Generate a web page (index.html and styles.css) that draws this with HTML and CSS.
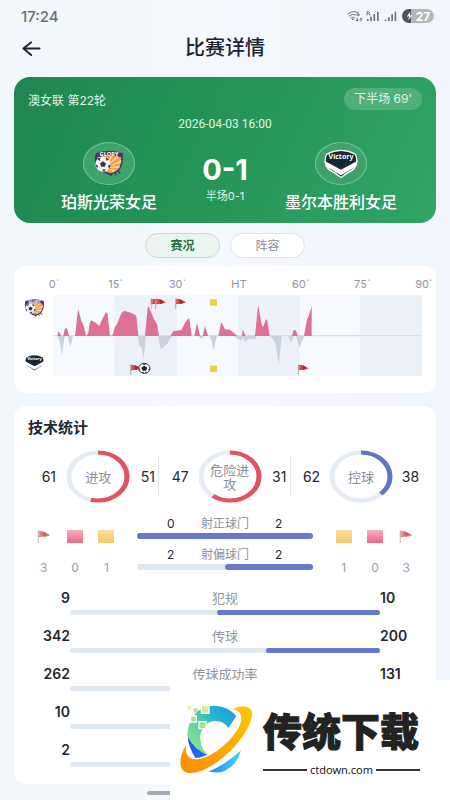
FILE: index.html
```html
<!DOCTYPE html>
<html lang="zh-CN">
<head>
<meta charset="utf-8">
<meta name="viewport" content="width=device-width, initial-scale=1">
<title>比赛详情</title>
<link rel="stylesheet" href="styles.css">
</head>
<body>
<svg class="defs" aria-hidden="true">
  <defs>
    <linearGradient id="gred" x1="0" y1="0" x2="0" y2="1"><stop offset="0" stop-color="#f9b0bb"/><stop offset="1" stop-color="#e8668a"/></linearGradient>
    <linearGradient id="gyel" x1="0" y1="0" x2="0" y2="1"><stop offset="0" stop-color="#fbdf9f"/><stop offset="1" stop-color="#f5c867"/></linearGradient>
    <symbol id="glory" viewBox="0 0 90 80">
      <path d="M5 9Q45-6 86 9Q91 45 73 64L50 76Q22 66 9 52Q-2 30 5 9Z" fill="#4d3566"/>
      <path d="M10 22Q45 12 81 21Q84 42 70 60L52 70Q25 62 14 48Z" fill="#f0a04b"/>
      <path d="M40 42L50 17L56 17ZM42 44L67 19L75 20ZM44 48L82 30L81 38ZM44 52L78 47L75 54ZM42 54L66 62L60 66Z" fill="#fbe0ae"/>
      <text x="45" y="18" text-anchor="middle" class="crest-text">GLORY</text>
      <circle cx="27" cy="42" r="23" fill="#f5f2f6"/>
      <path d="M27 33L36 40L32 50H22L18 40ZM10 26L20 22L16 33ZM35 21L45 28L38 32ZM4 42L12 47L10 55ZM24 58L35 57L30 65ZM42 47L50 42L46 57Z" fill="#3c2855"/>
      <path d="M53 68L50 78M62 64L66 76M71 59L78 70" stroke="#4d3566" stroke-width="4"/>
    </symbol>
    <symbol id="victory" viewBox="0 0 106 90">
      <path d="M8 15Q53-10 98 15Q110 47 88 65Q70 74 53 88Q36 74 18 65Q-4 47 8 15Z" fill="#fff"/>
      <path d="M11 17Q53-5 95 17Q105 44 86 61Q69 70 53 83Q37 70 20 61Q1 44 11 17Z" fill="#172735"/>
      <path d="M3 35L53 62L103 35L99 52L53 79L7 52Z" fill="#fff"/>
      <text x="53" y="29" text-anchor="middle" class="crest-text crest-victory">Victory</text>
    </symbol>
    <symbol id="flag" viewBox="0 0 34 34">
      <path d="M2 1V34" stroke="#b9a9ae" stroke-width="3"/>
      <path d="M3 2L15 4L33 13Q25 18 15 17L3 19Z" fill="#d93c48"/>
      <path d="M15 4L25 9L20 17H15Z" fill="#a92735"/>
      <path d="M6 4V16" stroke="#f0868c" stroke-width="3"/>
    </symbol>
    <symbol id="red" viewBox="0 0 48 39"><rect width="48" height="39" fill="url(#gred)"/></symbol>
    <symbol id="yellow" viewBox="0 0 48 39"><rect width="48" height="39" fill="url(#gyel)"/></symbol>
  </defs>
</svg>

<div class="status">
  <span class="clock">17:24</span>
  <div class="status-icons">
    <svg class="signals" viewBox="0 0 156 40" aria-hidden="true">
      <g fill="none" stroke="#6c6e73" stroke-width="3">
        <path d="M3 13Q19 0 33 8M7 19Q18 9 29 16M13 25Q19 19 25 24"/>
        <path d="M37 6Q31 9 32 15Q35 19 39 16Q40 11 33 12M33 24V34M29 30L33 34L37 30M44 35V25M40 29L44 25L48 29" stroke-width="3"/>
        <path d="M63 16V5H68Q73 8 68 11H63M68 11L73 17" stroke-width="3"/>
        <path d="M65 34V28M75 34V21M85 34V12M96 34V5M120 34V29M130 34V22M140 34V13M150 34V5" stroke-width="5"/>
      </g>
      <circle cx="19" cy="28" r="3" fill="#6c6e73"/>
    </svg>
    <span class="battery">
      <svg class="bolt" viewBox="0 0 18 24" aria-hidden="true"><path d="M11 1L2 13H8L6 23L16 10H10Z" fill="#fff"/></svg>27
    </span>
  </div>
</div>

<header class="topbar">
  <button class="back" aria-label="返回">
    <svg viewBox="0 0 60 48" aria-hidden="true"><path d="M56 24H5M29 4L4 24L29 45" fill="none" stroke="#202434" stroke-width="6" stroke-linecap="round" stroke-linejoin="round"/></svg>
  </button>
  <h1>比赛详情</h1>
</header>

<main>
  <section class="hero">
    <div class="hero-top"><span>澳女联 第22轮</span><span class="pill">下半场 69'</span></div>
    <p class="date">2026-04-03 16:00</p>
    <div class="match">
      <div class="team"><span class="crest"><svg class="crest-home"><use href="#glory"/></svg></span><strong>珀斯光荣女足</strong></div>
      <div class="score"><strong>0-1</strong><span>半场0-1</span></div>
      <div class="team"><span class="crest"><svg class="crest-away"><use href="#victory"/></svg></span><strong>墨尔本胜利女足</strong></div>
    </div>
  </section>

  <nav class="tabs">
    <button class="tab active">赛况</button>
    <button class="tab">阵容</button>
  </nav>

  <section class="card trend">
    <div class="times"><span>0`</span><span>15`</span><span>30`</span><span>HT</span><span>60`</span><span>75`</span><span>90`</span></div>
    <div class="trend-body">
      <div class="sides"><svg><use href="#glory"/></svg><svg><use href="#victory"/></svg></div>
      <svg class="plot" viewBox="159 105 1107 243" preserveAspectRatio="none" role="img" aria-label="进攻走势">
        <rect x="159" y="105" width="1107" height="243" fill="#f6f9fd"/>
        <path d="M343 105h188v243H343zM714 105h185v243H714zM1081 105h185v243h-185z" fill="#ecf1f9"/>
        <path d="M159 227H1266" stroke="#d4dae3" stroke-width="3"/>
        <path fill="#cbd1dd" d="M174 228L179 245L186 287L192 240L196 228ZM203 228L211 262L219 228ZM413 228L418 255L424 262L431 295L438 228ZM474 228L479 252L483 270L491 261L503 250L508 238L518 228ZM596 228L604 236L611 228ZM630 228L636 248L641 272L646 245L651 228ZM700 228L714 238L724 242L728 232L735 245L745 238L765 238L770 228ZM810 228L820 240L827 252L836 315L845 228ZM864 228L873 249L882 228ZM888 228L898 262L908 238L914 228Z"/>
        <path fill="#df7095" d="M172 228L176 214L184 228H190Q194 203 198 203T207 228H225L233 157Q235 145 237 155L243 180L252 200L258 228L264 222L270 186Q272 180 276 182L285 187L298 198L308 175L317 159Q321 154 323 163L330 228L338 225L345 200L351 193L362 165Q367 153 374 153L388 157L405 164Q409 166 410 176L415 228H435L443 144Q445 135 448 145L453 155L462 178L472 195L477 228H511L520 214L545 209L555 188L564 177Q567 173 569 182L575 228H583L591 188L600 228H608L615 197L624 228H655L663 190Q665 186 667 191L675 208L690 209L713 228H726L728 208L737 228H765L773 146Q775 131 777 146L785 195L790 200L797 180Q799 174 802 183L809 228H876Q884 190 893 228H912L921 178L926 168L935 138V228Z"/>
        <use href="#flag" x="451" y="114" width="34" height="34"/><use href="#flag" x="465" y="114" width="34" height="34"/>
        <use href="#flag" x="525" y="114" width="34" height="34"/>
        <use href="#flag" x="390" y="312" width="34" height="34"/><use href="#flag" x="893" y="312" width="34" height="34"/>
        <path d="M630 118h21v19h-21zM630 317h21v19h-21z" fill="#e8cf4d"/>
        <ellipse cx="433" cy="325" rx="17" ry="15" fill="#f5f5f5" stroke="#333" stroke-width="3"/>
        <path d="M433 317L442 323L438 332H428L424 323ZM425 311H441L433 315ZM417 323L421 330L418 332ZM449 323L445 330L449 332ZM424 337L430 335L432 340ZM442 337L437 335L435 340Z" fill="#222"/>
      </svg>
    </div>
  </section>

  <section class="card stats">
    <h2>技术统计</h2>
    <div class="rings">
      <div class="ring-cell"><b>61</b><div class="ring">
        <svg viewBox="0 0 64 64" preserveAspectRatio="none"><circle class="track" cx="32" cy="32" r="29"/><circle class="arc red" cx="32" cy="32" r="29" pathLength="100" stroke-dasharray="54 100"/></svg><span>进攻</span></div><b>51</b></div>
      <div class="ring-cell"><b>47</b><div class="ring">
        <svg viewBox="0 0 64 64" preserveAspectRatio="none"><circle class="track" cx="32" cy="32" r="29"/><circle class="arc red" cx="32" cy="32" r="29" pathLength="100" stroke-dasharray="60 100"/></svg><span>危险进攻</span></div><b>31</b></div>
      <div class="ring-cell"><b>62</b><div class="ring">
        <svg viewBox="0 0 64 64" preserveAspectRatio="none"><circle class="track" cx="32" cy="32" r="29"/><circle class="arc blue" cx="32" cy="32" r="29" pathLength="100" stroke-dasharray="38 100"/></svg><span>控球</span></div><b>38</b></div>
    </div>

    <div class="discipline">
      <div class="cards">
        <div><svg class="faded"><use href="#flag"/></svg><span>3</span></div>
        <div><svg><use href="#red"/></svg><span>0</span></div>
        <div><svg><use href="#yellow"/></svg><span>1</span></div>
      </div>
      <div class="shots">
        <div class="shot"><div class="shot-text"><b>0</b><span>射正球门</span><b>2</b></div><div class="bar"><i style="width:100%"></i></div></div>
        <div class="shot"><div class="shot-text"><b>2</b><span>射偏球门</span><b>2</b></div><div class="bar"><i style="width:50%"></i></div></div>
      </div>
      <div class="cards">
        <div><svg><use href="#yellow"/></svg><span>1</span></div>
        <div><svg><use href="#red"/></svg><span>0</span></div>
        <div><svg class="faded"><use href="#flag"/></svg><span>3</span></div>
      </div>
    </div>

    <div class="row"><b>9</b><span>犯规</span><b>10</b><div class="bar"><i style="width:52.6%"></i></div></div>
    <div class="row"><b>342</b><span>传球</span><b>200</b><div class="bar"><i style="width:36.9%"></i></div></div>
    <div class="row"><b>262</b><span>传球成功率</span><b>131</b><div class="bar"><i style="width:33.3%"></i></div></div>
    <div class="row"><b>10</b><span></span><b></b><div class="bar"></div></div>
    <div class="row"><b>2</b><span></span><b></b><div class="bar"></div></div>
  </section>
  <div class="home-bar"></div>
</main>

<aside class="brand">
  <svg class="brand-logo" viewBox="40 85 228 216" aria-hidden="true">
    <defs>
      <linearGradient id="lc" x1="0" y1="1" x2="1" y2="0"><stop offset="0" stop-color="#a0ec83"/><stop offset=".45" stop-color="#56cfa6"/><stop offset=".65" stop-color="#27b7d2"/><stop offset="1" stop-color="#149be5"/></linearGradient>
      <linearGradient id="lo" x1="0" y1="1" x2="1" y2="0"><stop offset="0" stop-color="#ff8a00"/><stop offset="1" stop-color="#ffc800"/></linearGradient>
      <linearGradient id="lb" x1="0" y1="0" x2="1" y2="1"><stop offset="0" stop-color="#1748e8"/><stop offset="1" stop-color="#2e7bff"/></linearGradient>
      <linearGradient id="ls" x1="0" y1="0" x2="1" y2="0"><stop offset="0" stop-color="#2485ee"/><stop offset="1" stop-color="#48d4ff"/></linearGradient>
    </defs>
    <path d="M69 178Q70 220 95 254L140 243Q93 230 69 178Z" fill="url(#lb)"/>
    <path d="M69 185C69 125 105 92 152 93Q190 95 215 124L191 160Q177 138 151 139C122 140 104 166 107 196Q110 227 133 243Q85 224 69 185Z" fill="url(#lc)"/>
    <path d="M133 290Q181 271 229 227Q218 271 181 288Q158 298 133 290Z" fill="url(#ls)"/>
    <path d="M196 106C222 90 252 88 262 106C274 132 236 199 181 246C126 294 60 315 48 279C40 256 51 225 67 204C61 235 70 252 93 252C128 251 181 216 213 169C237 135 232 104 196 106Z" fill="url(#lo)" stroke="#fff" stroke-width="4"/>
    <g stroke="#fff" stroke-width="4"><path d="M110 93h23v23h-23z" fill="#d6ec8e"/><path d="M103 141h21v21h-21zM78 124h17v18H78z" fill="#a6df85"/></g>
    <path d="M87 101h12v13H87z" fill="#bce58b"/><path d="M69 94h9v10h-9z" fill="#e4f0a7"/>
  </svg>
  <div class="brand-text"><strong>传统下载</strong><div class="brand-url"><span>ctdown.com</span></div></div>
</aside>
</body>
</html>
```
FILE: styles.css
```css
* { box-sizing: border-box; }
body {
  margin: 0;
  min-height: 100vh;
  background: linear-gradient(90deg, #f2f7fb, #f5f8fd 50%, #f1f5fc);
  color: #25272d;
  font-family: Inter, "Noto Sans CJK SC", sans-serif;
  font-size: 12px;
}
h1, h2, p { margin: 0; }
button { font: inherit; padding: 0; cursor: pointer; }
svg { display: block; }
.defs { position: absolute; width: 0; height: 0; }
.crest-text { font: 700 17px "Noto Sans", sans-serif; fill: #fff; }
.crest-victory { font-size: 21px; }

.status { display: flex; justify-content: space-between; align-items: center; height: 32px; padding: 0 16px 0 21px; }
.clock { font-size: 15px; font-weight: 500; color: #6c6e73; }
.status-icons { display: flex; align-items: center; gap: 4px; }
.signals { width: 52px; height: 13px; }
.battery {
  display: flex; align-items: center; justify-content: center; gap: 3px;
  width: 32px; height: 14px; border-radius: 7px;
  background: linear-gradient(90deg, #505257 28%, #b5b7bb 28%);
  color: #fff; font-size: 12px; font-weight: 700;
}
.bolt { width: 7px; height: 10px; }

.topbar { display: grid; grid-template-columns: 32px 1fr 32px; align-items: center; height: 32px; padding: 0 15px; }
.back { display: grid; place-items: center; height: 32px; border: 0; background: none; }
.back svg { width: 19px; height: 15px; }
h1 { font-size: 20px; line-height: 32px; font-weight: 500; text-align: center; color: #202334; }

main { padding: 13px 14px 0; }
.hero {
  padding: 11px 14px 10px; border-radius: 16px;
  background: linear-gradient(115deg, #1f8750, #239355 40%, #30a566);
  color: #e0f4e8;
}
.hero-top { display: flex; justify-content: space-between; align-items: center; }
.pill { padding: 0 10px; border-radius: 11px; line-height: 22px; background: #51af7a; }
.date { margin-top: 6px; line-height: 16px; font-family: Roboto, sans-serif; text-align: center; }
.match { display: grid; grid-template-columns: 1fr 70px 1fr; margin-top: 10px; }
.team { display: flex; flex-direction: column; align-items: center; gap: 6px; }
.team strong { font-size: 16px; line-height: 22px; font-weight: 500; color: #fff; white-space: nowrap; }
.crest { display: grid; place-items: center; width: 52px; height: 43px; border: 1px solid #75c797; border-radius: 50%; background: #3da26b; }
.crest-home { width: 30px; height: 27px; }
.crest-away { width: 36px; height: 30px; }
.score { display: flex; flex-direction: column; align-items: center; padding-top: 12px; gap: 3px; }
.score strong { font-size: 29px; line-height: 32px; font-weight: 700; color: #fff; }
.score span { font-size: 11px; line-height: 14px; }

.tabs { display: flex; justify-content: center; gap: 10px; padding: 10px 0 8px; }
.tab { width: 75px; height: 25px; border: 1px solid #dfe2e8; border-radius: 13px; background: #fff; color: #878b99; line-height: 22px; }
.tab.active { border-color: #c5dfcf; background: #e9f5ee; color: #26714a; font-weight: 700; }

.card { border-radius: 12px; background: #fff; }
.trend { padding: 10px 14px 17px; }
.times { display: flex; justify-content: space-between; margin: 0 -14px 0 14px; font-size: 11px; line-height: 16px; color: #9296a0; }
.times span { width: 24px; text-align: center; }
.trend-body { display: grid; grid-template-columns: 25px 1fr; margin-top: 3px; }
.sides { display: flex; flex-direction: column; justify-content: space-between; padding: 4px 0; margin-left: -4px; }
.sides svg { width: 21px; height: 18px; }
.plot { width: 100%; height: 81px; }

.stats { margin-top: 13px; padding: 12px 14px 5px; }
h2 { font-size: 15px; line-height: 20px; font-weight: 700; color: #23262e; }
.rings { display: grid; grid-template-columns: repeat(3, 1fr); margin-top: 12px; }
.ring-cell { position: relative; display: flex; align-items: center; justify-content: flex-end; gap: 9px; padding-right: 3px; }
.ring-cell:not(:last-child)::after { content: ""; position: absolute; right: 0; top: 6px; bottom: 6px; width: 1px; background: #e4e6ea; }
.ring-cell b { width: 17px; font-size: 14px; font-weight: 400; display: flex; justify-content: center; }
.ring { display: grid; place-items: center; width: 64px; height: 53px; }
.ring > * { grid-area: 1 / 1; }
.ring svg { width: 64px; height: 53px; }
.ring span { width: 42px; font-size: 13px; line-height: 14px; text-align: center; color: #898e99; }
.track, .arc { fill: none; stroke-width: 5; }
.track { stroke: #e5ecf4; }
.arc { transform: rotate(-90deg); transform-origin: 32px 32px; }
.red { stroke: #e15362; }
.blue { stroke: #6074ca; }

.discipline { display: grid; grid-template-columns: 94px 1fr 94px; gap: 15px; margin-top: 13px; }
.cards { display: grid; grid-template-columns: repeat(3, 1fr); padding-top: 14px; }
.cards div { display: flex; flex-direction: column; align-items: center; gap: 17px; }
.cards svg { width: 16px; height: 13px; }
.faded { opacity: .7; }
.cards span { line-height: 16px; color: #9b9fa8; }
.shot { height: 31px; }
.shot-text { display: flex; justify-content: center; gap: 26px; line-height: 16px; margin-bottom: 1px; color: #8c919d; }
.shot-text b { width: 8px; font-weight: 400; color: #25272d; }
.bar { display: flex; justify-content: flex-end; height: 6px; border-radius: 3px; background: #dfe7f0; }
.bar i { border-radius: 3px; background: #6678d0; }

.row { display: grid; grid-template-columns: 42px 1fr 42px; height: 38px; align-content: start; row-gap: 3px; line-height: 18px; }
.row b { font-size: 14px; font-weight: 600; }
.row b:first-child { text-align: right; }
.row span { font-size: 13px; text-align: center; color: #8f949e; }
.row .bar { grid-column: 2; height: 5px; }
.discipline + .row { margin-top: 11px; }
.home-bar { width: 156px; height: 4px; margin: 7px auto 5px; border-radius: 2px; background: #a7a9ad; }

.brand { position: fixed; right: 0; bottom: 0; display: flex; gap: 9px; width: 280px; height: 120px; padding: 23px 8px; background: #fff; }
.brand-logo { width: 76px; height: 72px; }
.brand-text { display: flex; flex-direction: column; gap: 5px; width: 157px; }
.brand-text strong { font: 900 39px/52px "Noto Sans CJK SC", sans-serif; color: #222; -webkit-text-stroke: 1px #222; white-space: nowrap; }
.brand-url { display: flex; align-items: center; gap: 3px; font: 11px/20px "Noto Sans", sans-serif; color: #222; }
.brand-url::before, .brand-url::after { content: ""; flex: 1; height: 2px; background: #333; }
```
